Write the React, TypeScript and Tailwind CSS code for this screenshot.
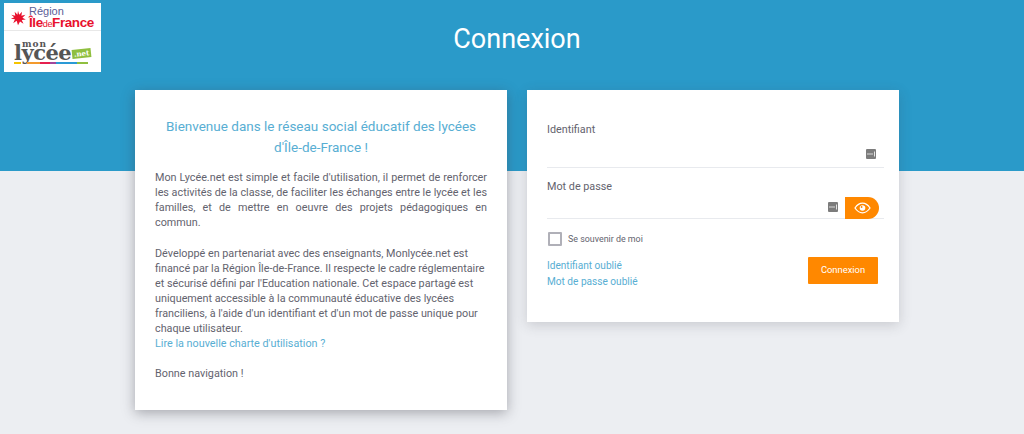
import { useState } from 'react';

function KeyIcon() {
  return (
    <svg width="10" height="10" viewBox="0 0 10 10">
      <rect width="10" height="10" rx="1" fill="#7c7c7c" />
      <circle cx="2" cy="5" r="0.7" fill="#fff" />
      <circle cx="4" cy="5" r="0.7" fill="#fff" />
      <circle cx="6" cy="5" r="0.7" fill="#fff" />
      <rect x="8" y="2.5" width="0.8" height="5" fill="#fff" />
    </svg>
  );
}

function Logo() {
  return (
    <div className="absolute left-[4px] top-[3px] w-[97px] h-[69px] bg-white flex flex-col">
      <div className="h-[28px] flex items-center pl-[6px] border-b border-[#e8e8e8]">
        <svg width="16" height="16" viewBox="0 0 24 24" className="shrink-0 mt-[3px]">
          <path
            d="M12 1l1.8 6.2L18 2.500l-.9 6.300 6-1.600-4.400 4.600 4.900 2.300-6 .9 2.600 5.800-5.200-3.600L12 23l-2-6.800-5.200 3.600 2.600-5.800-6-.9 4.900-2.300L1.900 7.200l6 1.600L7 2.500l4.200 4.700z"
            fill="#e8112d"
          />
        </svg>
        <div className="ml-[3px] mt-[2px] font-['Liberation_Sans',sans-serif]">
          <div className="text-[11px] leading-[11px] text-[#5a6098]">Région</div>
          <div className="text-[13.5px] leading-[12px] font-bold tracking-[-0.4px] text-[#e8112d] whitespace-nowrap">
            Île<span className="font-normal text-[9px]">de</span>France
          </div>
        </div>
      </div>
      <div className="flex-1 pl-[10px] pt-[10px] font-['DejaVu_Serif',serif] text-[#555]">
        <div className="pl-[8px] text-[9px] leading-[7px] font-bold tracking-[1px]">mon</div>
        <div className="flex items-end h-[17px] -mt-[4px]">
          <span className="text-[21px] leading-[17px] font-bold tracking-[-0.5px]">lycée</span>
          <span className="mb-[3px] ml-[1px] px-[2px] bg-[#8fbf3f] text-white text-[7px] leading-[9px] font-bold -rotate-6">.net</span>
        </div>
        <div className="flex h-[2px] w-[74px] mt-[1px]">
          <div className="w-[7px] bg-[#f5c400]" />
          <div className="w-[6px]" />
          <div className="w-[13px] bg-[#f39a2d]" />
          <div className="w-[10px] bg-[#e5204f]" />
          <div className="w-[6px] bg-[#a0469c]" />
          <div className="w-[21px] bg-[#2a9ad6]" />
          <div className="w-[11px] bg-[#8fbf3f]" />
        </div>
      </div>
    </div>
  );
}

export default function App() {
  const [showPassword, setShowPassword] = useState(false);
  const [remember, setRemember] = useState(false);

  return (
    <div className="relative min-h-screen bg-[#eceef2] font-['Roboto',sans-serif] overflow-hidden">
      <header className="h-[171px] bg-[#2a9ac9] pt-[21px] pl-[10px] text-center">
        <h1 className="text-[27px] leading-[36px] text-white">Connexion</h1>
      </header>
      <Logo />

      <main className="-mt-[81px] pl-[10px] flex justify-center gap-[20px]">
        <section className="w-[372px] h-[320px] bg-white px-[20px] pt-[26px] shadow-[0_3px_12px_rgba(60,60,70,0.4)]">
          <h2 className="text-[13.5px] leading-[21px] text-center text-[#58aed3] mb-[12px]">
            Bienvenue dans le réseau social éducatif des lycées
            <br />
            d'Île-de-France !
          </h2>
          <p className="text-[10.8px] leading-[15px] text-[#63636e] text-justify">
            Mon Lycée.net est simple et facile d'utilisation, il permet de renforcer les activités de la classe, de
            faciliter les échanges entre le lycée et les familles, et de mettre en oeuvre des projets pédagogiques en
            commun.
          </p>
          <p className="mt-[16px] text-[10.8px] leading-[15px] text-[#63636e]">
            Développé en partenariat avec des enseignants, Monlycée.net est financé par la Région Île-de-France. Il
            respecte le cadre réglementaire et sécurisé défini par l'Education nationale. Cet espace partagé est
            uniquement accessible à la communauté éducative des lycées franciliens, à l'aide d'un identifiant et d'un
            mot de passe unique pour chaque utilisateur.
            <br />
            <a href="#" className="text-[#58aed3]">
              Lire la nouvelle charte d'utilisation ?
            </a>
          </p>
          <p className="mt-[15px] text-[10.8px] leading-[15px] text-[#63636e]">Bonne navigation !</p>
        </section>

        <section className="w-[372px] h-[232px] bg-white pl-[20px] pr-[15px] pt-[32px] shadow-[0_3px_12px_rgba(60,60,70,0.2)]">
          <label className="block text-[10.8px] leading-[16px] text-[#63636e]">Identifiant</label>
          <div className="h-[30px] border-b border-[#e8eaee] flex items-center justify-end pr-[8px] pt-[2px]">
            <KeyIcon />
          </div>
          <label className="block mt-[11px] text-[10.8px] leading-[16px] text-[#63636e]">Mot de passe</label>
          <div className="flex items-end justify-between mt-[1px] pr-[5px] h-[23px] border-b border-[#e8eaee]">
            <div className="flex-1 flex justify-end pr-[7px] pb-[6px]">
              <KeyIcon />
            </div>
            <button
              type="button"
              onClick={() => setShowPassword(!showPassword)}
              className="w-[34px] h-[22px] bg-[#ff8800] rounded-r-[11px] flex items-center justify-center mb-[-1px]"
            >
              <svg width="17" height="12" viewBox="0 0 17 12" fill="none" stroke="#fff" strokeWidth="1.3">
                <path d="M1 6c2-3 4.500-4.800 7.500-4.800S14 3 16 6c-2 3-4.500 4.800-7.500 4.800S3 9 1 6z" />
                <circle cx="8.500" cy="6" r="2.800" fill="#fff" stroke="none" />
                <circle cx="7.600" cy="5" r="0.900" fill="#ff8800" stroke="none" />
              </svg>
            </button>
          </div>

          <label className="flex items-center mt-[13px] pl-[1px]">
            <input
              type="checkbox"
              checked={remember}
              onChange={(e) => setRemember(e.target.checked)}
              className="appearance-none w-[14px] h-[14px] border-2 border-[#b0b0b8] rounded-[1px] bg-white"
            />
            <span className="ml-[6px] text-[8.9px] leading-[14px] text-[#63636e]">Se souvenir de moi</span>
          </label>

          <div className="flex justify-between items-start mt-[11px] pr-[6px]">
            <div className="text-[10.1px] leading-[16px] text-[#58aed3] flex flex-col pt-[1px]">
              <a href="#">Identifiant oublié</a>
              <a href="#">Mot de passe oublié</a>
            </div>
            <button
              type="button"
              className="w-[70px] h-[27px] bg-[#ff8800] rounded-[1px] text-white text-[9.4px]"
            >
              Connexion
            </button>
          </div>
        </section>
      </main>
    </div>
  );
}
